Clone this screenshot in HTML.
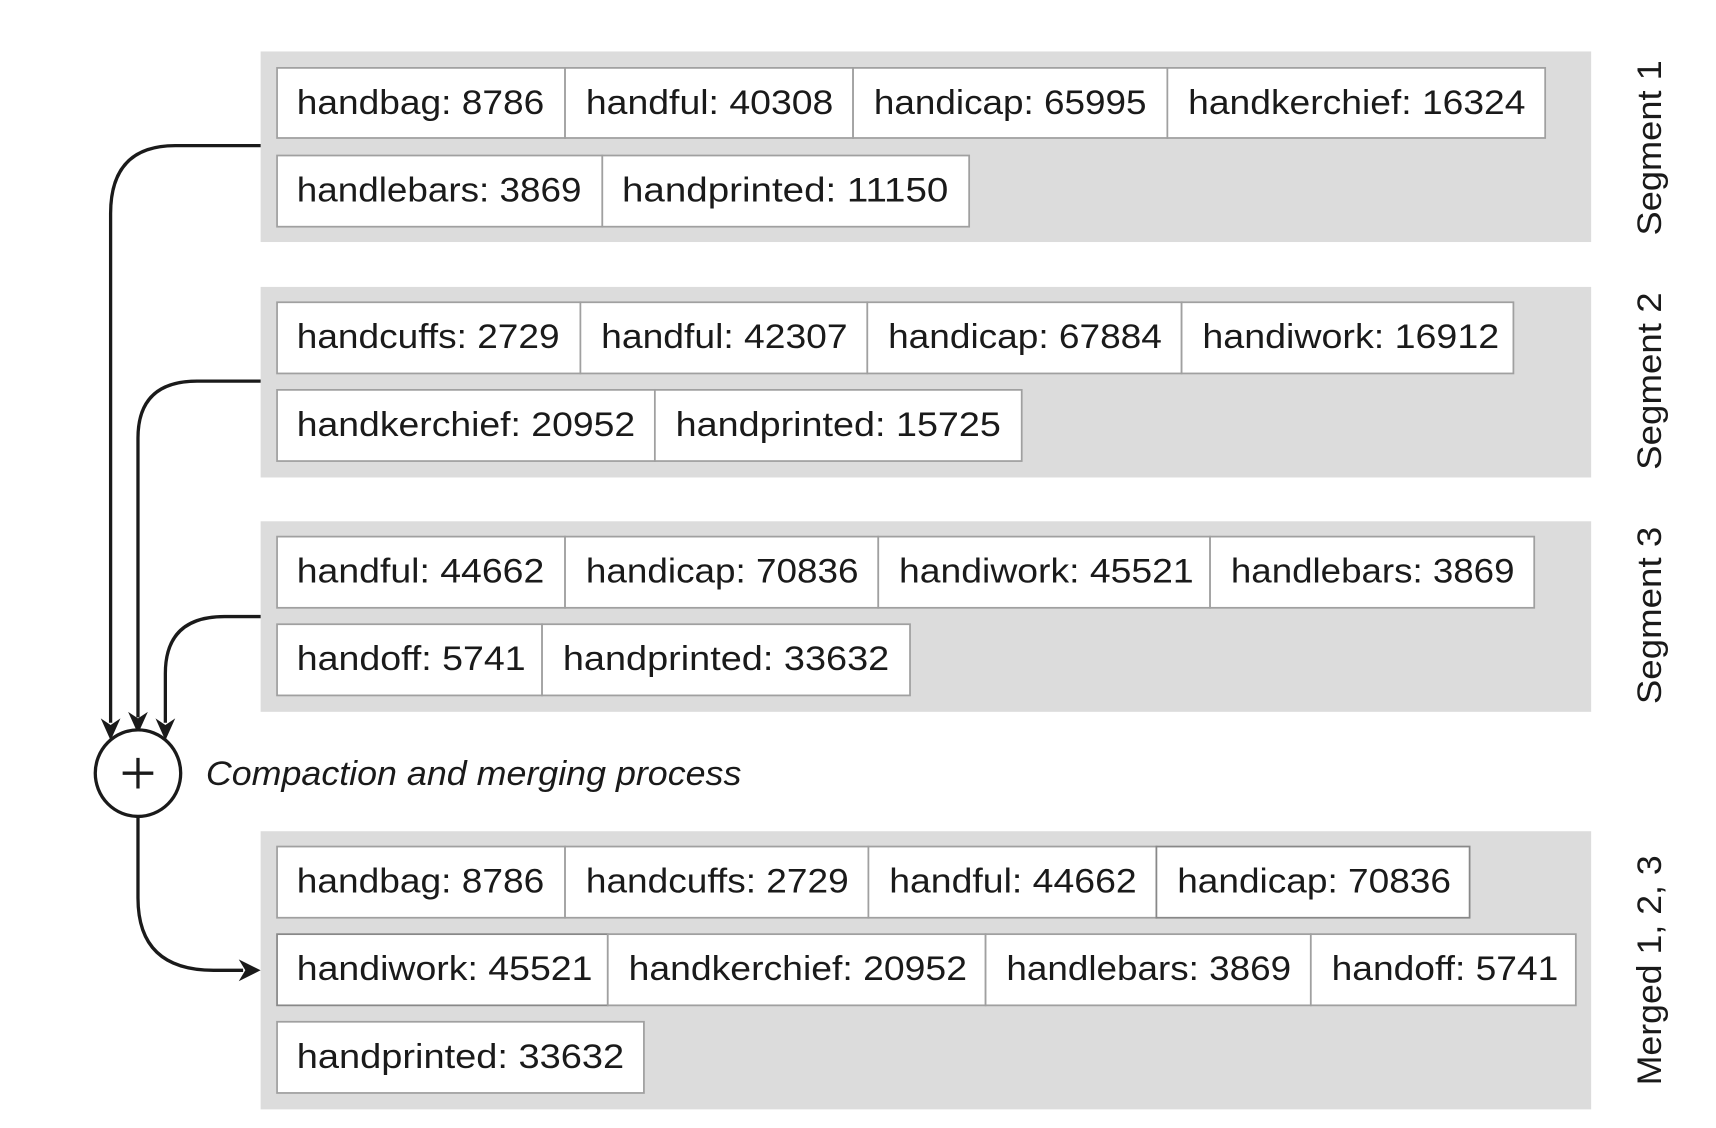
<!DOCTYPE html>
<html><head><meta charset="utf-8"><style>
html,body{margin:0;padding:0;background:#fff;}
svg{display:block;}
text{font-family:"Liberation Sans",sans-serif;fill:#1a1a1a;}
.b{fill:#fff;stroke:#a0a0a0;stroke-width:1.6;}
.g{fill:#dcdcdc;}
.t{font-size:31px;}
.l{font-size:31px;}
.ln{fill:none;stroke:#1a1a1a;stroke-width:3;}
.ar{fill:#1a1a1a;}
</style></head><body>
<svg width="1716" height="1128" viewBox="0 0 1567 1030" preserveAspectRatio="none" xmlns="http://www.w3.org/2000/svg">
<rect class="g" x="238" y="47" width="1215" height="174"/>
<rect class="g" x="238" y="262" width="1215" height="174"/>
<rect class="g" x="238" y="476" width="1215" height="174"/>
<rect class="g" x="238" y="759" width="1215" height="254"/>

<!-- Segment 1 -->
<rect class="b" x="253" y="62" width="263" height="64"/><text class="t" x="271" y="104" textLength="226" lengthAdjust="spacingAndGlyphs">handbag: 8786</text>
<rect class="b" x="516" y="62" width="263" height="64"/><text class="t" x="535" y="104" textLength="226" lengthAdjust="spacingAndGlyphs">handful: 40308</text>
<rect class="b" x="779" y="62" width="287" height="64"/><text class="t" x="798" y="104" textLength="249" lengthAdjust="spacingAndGlyphs">handicap: 65995</text>
<rect class="b" x="1066" y="62" width="345" height="64"/><text class="t" x="1085" y="104" textLength="308" lengthAdjust="spacingAndGlyphs">handkerchief: 16324</text>
<rect class="b" x="253" y="142" width="297" height="65"/><text class="t" x="271" y="184" textLength="260" lengthAdjust="spacingAndGlyphs">handlebars: 3869</text>
<rect class="b" x="550" y="142" width="335" height="65"/><text class="t" x="568" y="184" textLength="298" lengthAdjust="spacingAndGlyphs">handprinted: 11150</text>

<!-- Segment 2 -->
<rect class="b" x="253" y="276" width="277" height="65"/><text class="t" x="271" y="318" textLength="240" lengthAdjust="spacingAndGlyphs">handcuffs: 2729</text>
<rect class="b" x="530" y="276" width="262" height="65"/><text class="t" x="549" y="318" textLength="225" lengthAdjust="spacingAndGlyphs">handful: 42307</text>
<rect class="b" x="792" y="276" width="287" height="65"/><text class="t" x="811" y="318" textLength="250" lengthAdjust="spacingAndGlyphs">handicap: 67884</text>
<rect class="b" x="1079" y="276" width="303" height="65"/><text class="t" x="1098" y="318" textLength="271" lengthAdjust="spacingAndGlyphs">handiwork: 16912</text>
<rect class="b" x="253" y="356" width="345" height="65"/><text class="t" x="271" y="398" textLength="309" lengthAdjust="spacingAndGlyphs">handkerchief: 20952</text>
<rect class="b" x="598" y="356" width="335" height="65"/><text class="t" x="617" y="398" textLength="297" lengthAdjust="spacingAndGlyphs">handprinted: 15725</text>

<!-- Segment 3 -->
<rect class="b" x="253" y="490" width="263" height="65"/><text class="t" x="271" y="532" textLength="226" lengthAdjust="spacingAndGlyphs">handful: 44662</text>
<rect class="b" x="516" y="490" width="286" height="65"/><text class="t" x="535" y="532" textLength="249" lengthAdjust="spacingAndGlyphs">handicap: 70836</text>
<rect class="b" x="802" y="490" width="303" height="65"/><text class="t" x="821" y="532" textLength="269" lengthAdjust="spacingAndGlyphs">handiwork: 45521</text>
<rect class="b" x="1105" y="490" width="296" height="65"/><text class="t" x="1124" y="532" textLength="259" lengthAdjust="spacingAndGlyphs">handlebars: 3869</text>
<rect class="b" x="253" y="570" width="242" height="65"/><text class="t" x="271" y="612" textLength="209" lengthAdjust="spacingAndGlyphs">handoff: 5741</text>
<rect class="b" x="495" y="570" width="336" height="65"/><text class="t" x="514" y="612" textLength="298" lengthAdjust="spacingAndGlyphs">handprinted: 33632</text>

<!-- Merged -->
<rect class="b" x="253" y="773" width="263" height="65"/><text class="t" x="271" y="815" textLength="226" lengthAdjust="spacingAndGlyphs">handbag: 8786</text>
<rect class="b" x="516" y="773" width="277" height="65"/><text class="t" x="535" y="815" textLength="240" lengthAdjust="spacingAndGlyphs">handcuffs: 2729</text>
<rect class="b" x="793" y="773" width="263" height="65"/><text class="t" x="812" y="815" textLength="226" lengthAdjust="spacingAndGlyphs">handful: 44662</text>
<rect class="b" x="1056" y="773" width="286" height="65" style="stroke:#888"/><text class="t" x="1075" y="815" textLength="250" lengthAdjust="spacingAndGlyphs">handicap: 70836</text>
<rect class="b" x="253" y="853" width="302" height="65" style="stroke:#888"/><text class="t" x="271" y="895" textLength="270" lengthAdjust="spacingAndGlyphs">handiwork: 45521</text>
<rect class="b" x="555" y="853" width="345" height="65"/><text class="t" x="574" y="895" textLength="309" lengthAdjust="spacingAndGlyphs">handkerchief: 20952</text>
<rect class="b" x="900" y="853" width="297" height="65"/><text class="t" x="919" y="895" textLength="260" lengthAdjust="spacingAndGlyphs">handlebars: 3869</text>
<rect class="b" x="1197" y="853" width="242" height="65"/><text class="t" x="1216" y="895" textLength="207" lengthAdjust="spacingAndGlyphs">handoff: 5741</text>
<rect class="b" x="253" y="933" width="335" height="65"/><text class="t" x="271" y="975" textLength="299" lengthAdjust="spacingAndGlyphs">handprinted: 33632</text>

<!-- vertical labels -->
<text class="l" transform="translate(1517,215) rotate(-90)" textLength="160" lengthAdjust="spacingAndGlyphs">Segment 1</text>
<text class="l" transform="translate(1517,429) rotate(-90)" textLength="162" lengthAdjust="spacingAndGlyphs">Segment 2</text>
<text class="l" transform="translate(1517,643) rotate(-90)" textLength="162" lengthAdjust="spacingAndGlyphs">Segment 3</text>
<text class="l" transform="translate(1517,991) rotate(-90)" textLength="210" lengthAdjust="spacingAndGlyphs">Merged 1, 2, 3</text>

<!-- arrows -->
<path class="ln" d="M238,133 L160,133 Q101,133 101,195 L101,660"/>
<path class="ar" d="M92,656 L101,676 L110,656 L101,662 Z"/>
<path class="ln" d="M238,348 L180,348 Q126,348 126,400 L126,655"/>
<path class="ar" d="M117,650 L126,670 L135,650 L126,656 Z"/>
<path class="ln" d="M238,563 L205,563 Q151,563 151,615 L151,660"/>
<path class="ar" d="M142,656 L151,676 L160,656 L151,662 Z"/>
<ellipse cx="126" cy="706" rx="39" ry="39.5" fill="#fff" stroke="#1a1a1a" stroke-width="3"/>
<path d="M126,692 V720 M112,706 H140" stroke="#1a1a1a" stroke-width="3"/>
<path class="ln" d="M126,746 L126,820 Q126,886 195,886 L222,886"/>
<path class="ar" d="M218,876 L238,886 L218,896 L224,886 Z"/>
<text x="188" y="717" style="font-size:31px;font-style:italic" textLength="489" lengthAdjust="spacingAndGlyphs">Compaction and merging process</text>
</svg>
</body></html>
